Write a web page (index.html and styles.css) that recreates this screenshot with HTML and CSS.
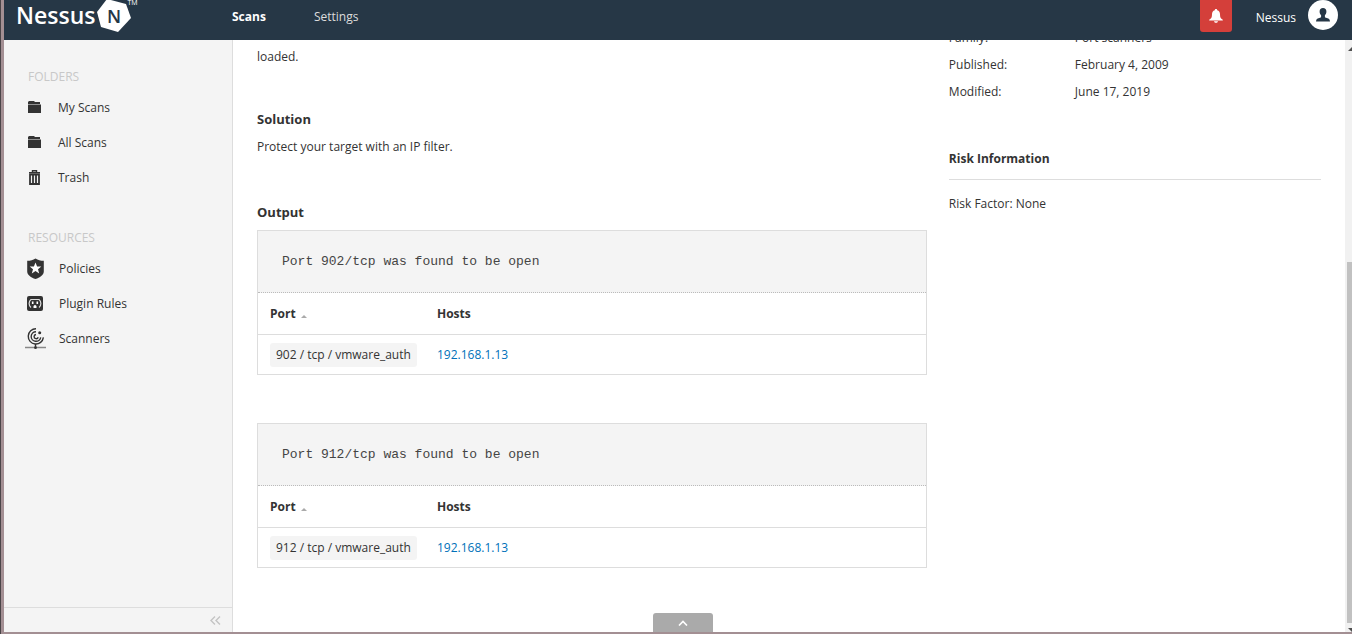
FILE: index.html
```
<!DOCTYPE html>
<html lang="en">
<head>
    <meta charset="UTF-8">
    <meta name="viewport" content="width=device-width, initial-scale=1.0">
    <title>Nessus</title>
    <link rel="stylesheet" href="styles.css">
</head>
<body>
    <header class="topbar">
        <a class="logo" href="#">
            <span class="logo-name">Nessus</span>
            <svg class="logo-mark" width="34" height="34" viewBox="0 0 34 34">
                <polygon points="10,0 29,5 34,19 21,33 4,28 0,13" fill="#fff"/>
                <text class="logo-letter" x="17" y="24" text-anchor="middle" fill="#263746">N</text>
            </svg>
            <span class="logo-tm">TM</span>
        </a>
        <nav class="main-nav">
            <a class="active" href="#">Scans</a>
            <a href="#">Settings</a>
        </nav>
        <div class="account">
            <button class="bell" aria-label="Notifications">
                <svg width="14" height="14" viewBox="0 0 14 14">
                    <path d="M7 0c.8 0 1.2.5 1.2 1.2C10.2 1.8 11 3.3 11 5.2c0 3 .6 4.3 2.8 5.6v.7H.2v-.7C2.4 9.500 3 8.200 3 5.200 3 3.300 3.800 1.800 5.800 1.200 5.800.5 6.200 0 7 0zM5 12.200h4c-.3 1-1 1.500-2 1.500s-1.700-.5-2-1.500z" fill="#fff"/>
                </svg>
            </button>
            <span class="user-name">Nessus</span>
            <button class="avatar" aria-label="User menu">
                <svg width="14" height="14" viewBox="0 0 14 14">
                    <path d="M7 0c2.200 0 3.400 1.500 3.400 3.500 0 1.800-.7 2.900-1.500 3.800v1.400c0 .6.400.9 1.100 1.100 2.300.6 3.800 1.100 4 3.700H0c.2-2.600 1.700-3.100 4-3.700.7-.2 1.100-.5 1.100-1.100V7.300C4.300 6.400 3.600 5.300 3.600 3.500 3.600 1.500 4.800 0 7 0z" fill="#263746"/>
                </svg>
            </button>
        </div>
    </header>

    <div class="layout">
        <aside class="sidebar">
            <nav class="side-nav">
                <h4>FOLDERS</h4>
                <a href="#">
                    <svg width="20" height="20" viewBox="0 0 20 20"><path d="M4 3h5l1 1h5v2H3V4zM3 6.500h13V15H3z" fill="#333"/></svg>
                    My Scans
                </a>
                <a href="#">
                    <svg width="20" height="20" viewBox="0 0 20 20"><path d="M4 3h5l1 1h5v2H3V4zM3 6.500h13V15H3z" fill="#333"/></svg>
                    All Scans
                </a>
                <a href="#">
                    <svg width="20" height="20" viewBox="0 0 20 20">
                        <path d="M7.500 4V2.700h4V4M4 4.700h11" fill="none" stroke="#333" stroke-width="1.400"/>
                        <path d="M5 6.500h9V16H5zM8 7v8M11 7v8" fill="none" stroke="#333" stroke-width="1.800"/>
                    </svg>
                    Trash
                </a>
                <h4>RESOURCES</h4>
                <a href="#">
                    <svg width="21" height="22" viewBox="0 0 21 22">
                        <path d="M10.500 .5c2.500 1.600 5 2.300 8.300 2.300v10.700c0 3.500-4 6-8.300 7.500-4.300-1.500-8.300-4-8.300-7.500V2.800c3.300 0 5.800-.7 8.300-2.300z" fill="#333"/>
                        <path d="M10.500 4.500l1.600 4h4.200l-3.300 2.700 1.200 4.300-3.700-2.500-3.700 2.500L8 11.200 4.700 8.500h4.200z" fill="#fff"/>
                    </svg>
                    Policies
                </a>
                <a href="#">
                    <svg width="21" height="20" viewBox="0 0 21 20">
                        <rect x="2" y="2" width="16" height="15" rx="2" fill="#333"/>
                        <path d="M6 13.500C3.500 11.500 3.500 7.500 6 5.500h8c2.500 2 2.500 6 0 8" fill="none" stroke="#ddd" stroke-width="1.200"/>
                        <path d="M7.700 7.500v2.500M12.300 7.500v2.500" stroke="#fff" stroke-width="1.600"/>
                        <path d="M8.500 14v-1.500a1.500 1.500 0 0 1 3 0V14z" fill="#fff"/>
                    </svg>
                    Plugin Rules
                </a>
                <a href="#">
                    <svg width="21" height="22" viewBox="0 0 21 22">
                        <g fill="none" stroke="#333" stroke-width="1.400">
                            <path d="M11 .8a7.600 7.600 0 1 0 7.400 8.600"/>
                            <path d="M11 3.700a4.800 4.800 0 1 0 4.700 5.600"/>
                            <path d="M11 6.500a2.100 2.100 0 1 0 2.200 2.700"/>
                            <path d="M10.500 16v4"/>
                        </g>
                        <circle cx="14.700" cy="4.700" r="1.500" fill="#333"/>
                        <path d="M0 19.500h21" stroke="#888" stroke-width="1.500"/>
                        <circle cx="10.500" cy="19.700" r="1.400" fill="#333"/>
                    </svg>
                    Scanners
                </a>
            </nav>
            <div class="side-footer">
                <button aria-label="Collapse sidebar">
                    <svg width="11" height="9" viewBox="0 0 11 9"><path d="M5 .5l-4 4 4 4M10 .5l-4 4 4 4" fill="none" stroke="#c4c4c4" stroke-width="1.400"/></svg>
                </button>
            </div>
        </aside>

        <main class="content">
            <section class="plugin">
                <p>loaded.</p>
                <h5>Solution</h5>
                <p>Protect your target with an IP filter.</p>
                <h5>Output</h5>

                <div class="output">
                    <pre>Port 902/tcp was found to be open</pre>
                    <table>
                        <thead>
                            <tr><th class="port">Port <span class="sort"></span></th><th>Hosts</th></tr>
                        </thead>
                        <tbody>
                            <tr><td><span class="tag">902 / tcp / vmware_auth</span></td><td><a href="#">192.168.1.13</a></td></tr>
                        </tbody>
                    </table>
                </div>

                <div class="output">
                    <pre>Port 912/tcp was found to be open</pre>
                    <table>
                        <thead>
                            <tr><th class="port">Port <span class="sort"></span></th><th>Hosts</th></tr>
                        </thead>
                        <tbody>
                            <tr><td><span class="tag">912 / tcp / vmware_auth</span></td><td><a href="#">192.168.1.13</a></td></tr>
                        </tbody>
                    </table>
                </div>
            </section>

            <section class="details">
                <dl>
                    <dt>Family:</dt><dd>Port scanners</dd>
                    <dt>Published:</dt><dd>February 4, 2009</dd>
                    <dt>Modified:</dt><dd>June 17, 2019</dd>
                </dl>
                <h5>Risk Information</h5>
                <p>Risk Factor: None</p>
            </section>
        </main>

        <div class="scroll-track">
            <span class="scroll-up"></span>
            <div class="scroll-thumb"></div>
            <span class="scroll-down"></span>
        </div>
    </div>

    <button class="drawer" aria-label="Open panel">
        <svg width="10" height="6" viewBox="0 0 10 6"><path d="M1 5.500l4-4 4 4" fill="none" stroke="#fff" stroke-width="1.600"/></svg>
    </button>
</body>
</html>
```

FILE: styles.css
```
* {
    box-sizing: border-box;
}
html {
    border-left: 1px solid #4b4548;
}
body {
    display: flex;
    flex-direction: column;
    height: 100vh;
    margin: 0;
    border-left: 3px solid #a38f93;
    border-bottom: 2px solid #a38f93;
    font-family: "Open Sans", "Noto Sans", sans-serif;
    font-size: 12px;
    line-height: 20px;
    color: #333;
    background-color: #fff;
    overflow: hidden;
}
h4, h5, p, pre, dl, dd {
    margin: 0;
}
a {
    color: inherit;
    text-decoration: none;
}
button {
    display: flex;
    align-items: center;
    justify-content: center;
    padding: 0;
    border: none;
    background: none;
    cursor: pointer;
}

/* Top bar */
.topbar {
    display: flex;
    align-items: flex-start;
    flex: none;
    height: 40px;
    padding-right: 14px;
    background-color: #263746;
    color: #fff;
    overflow: hidden;
}
.logo {
    display: flex;
    width: 228px;
    padding-left: 12px;
}
.logo-name {
    font-size: 23px;
    font-weight: 600;
    line-height: 30px;
}
.logo-mark {
    margin-left: 2px;
    margin-top: -1px;
}
.logo-letter {
    font-size: 18px;
    font-weight: 600;
}
.logo-tm {
    font-size: 7px;
    line-height: 6px;
    margin-left: -4px;
}
.main-nav {
    display: flex;
    gap: 48px;
    line-height: 34px;
    color: #ddd;
}
.main-nav .active {
    font-weight: bold;
    color: #fff;
}
.account {
    display: flex;
    margin-left: auto;
}
.bell {
    width: 32px;
    height: 32px;
    border-radius: 0 0 3px 3px;
    background-color: #d43f3a;
}
.user-name {
    margin: 0 12px 0 24px;
    line-height: 36px;
}
.avatar {
    width: 30px;
    height: 30px;
    border-radius: 50%;
    background-color: #fff;
}

.layout {
    display: flex;
    flex: 1;
    min-height: 0;
}

/* Sidebar */
.sidebar {
    display: flex;
    flex-direction: column;
    width: 229px;
    border-right: 1px solid #ddd;
    background-color: #f4f4f4;
}
.side-nav {
    flex: 1;
}
.side-nav h4 {
    margin: 27px 0 3px 24px;
    font-weight: normal;
    color: #c8c8c8;
}
.side-nav a + h4 {
    margin-top: 33px;
}
.side-nav a {
    display: flex;
    align-items: center;
    gap: 13px;
    height: 35px;
    padding-left: 21px;
}
.side-footer {
    display: flex;
    justify-content: flex-end;
    height: 25px;
    padding-right: 11px;
    border-top: 1px solid #ddd;
}

/* Content */
.content {
    display: grid;
    grid-template-columns: 9fr 5fr;
    gap: 22px;
    flex: 1;
    padding: 0 24px;
    overflow: hidden;
}
h5 {
    font-size: 13px;
    font-weight: bold;
}
.plugin {
    padding-top: 7px;
}
.plugin h5 {
    margin: 42px 0 8px;
}
.plugin p + h5:nth-of-type(2) {
    margin-top: 45px;
}
.output {
    margin-bottom: 48px;
    border: 1px solid #ddd;
}
.output pre {
    padding: 21px 24px 20px;
    border-bottom: 1px dotted #bbb;
    background-color: #f4f4f4;
    font-family: "Liberation Mono", "Courier New", monospace;
    font-size: 13px;
    color: #444;
}
table {
    width: 100%;
    border-spacing: 0;
    table-layout: fixed;
}
th, td {
    height: 39px;
    padding: 0 12px;
    text-align: left;
    white-space: nowrap;
}
th {
    height: 42px;
    border-bottom: 1px solid #ddd;
}
.port {
    width: 25%;
}
.sort {
    display: inline-block;
    margin-left: 2px;
    border: 3px solid transparent;
    border-top: none;
    border-bottom-color: #aaa;
}
.tag {
    display: inline-block;
    padding: 2px 6px;
    border-radius: 3px;
    background-color: #f4f4f4;
}
td a {
    color: #0071b9;
}
.details dl {
    display: grid;
    grid-template-columns: 126px 1fr;
    row-gap: 7px;
    margin-top: -12px;
}
.details h5 {
    margin: 47px 0 14px;
    padding-bottom: 10px;
    border-bottom: 1px solid #ddd;
    font-size: 12px;
}

/* Scrollbar */
.scroll-track {
    display: flex;
    flex-direction: column;
    align-items: flex-end;
    width: 7px;
    background-color: #f1f1f1;
    overflow: hidden;
}
.scroll-up, .scroll-down {
    flex: none;
    margin-right: -4px;
    border: 4px solid transparent;
}
.scroll-up {
    margin-top: 7px;
    border-top: none;
    border-bottom-color: #505050;
}
.scroll-down {
    margin-top: 5px;
    border-bottom: none;
    border-top-color: #505050;
}
.scroll-thumb {
    width: 5px;
    height: 61%;
    margin-top: auto;
    background-color: #c1c1c1;
}

.drawer {
    position: absolute;
    left: 50%;
    bottom: 2px;
    width: 60px;
    height: 19px;
    margin-left: -23px;
    border-radius: 3px 3px 0 0;
    background-color: #aaa;
}
```
